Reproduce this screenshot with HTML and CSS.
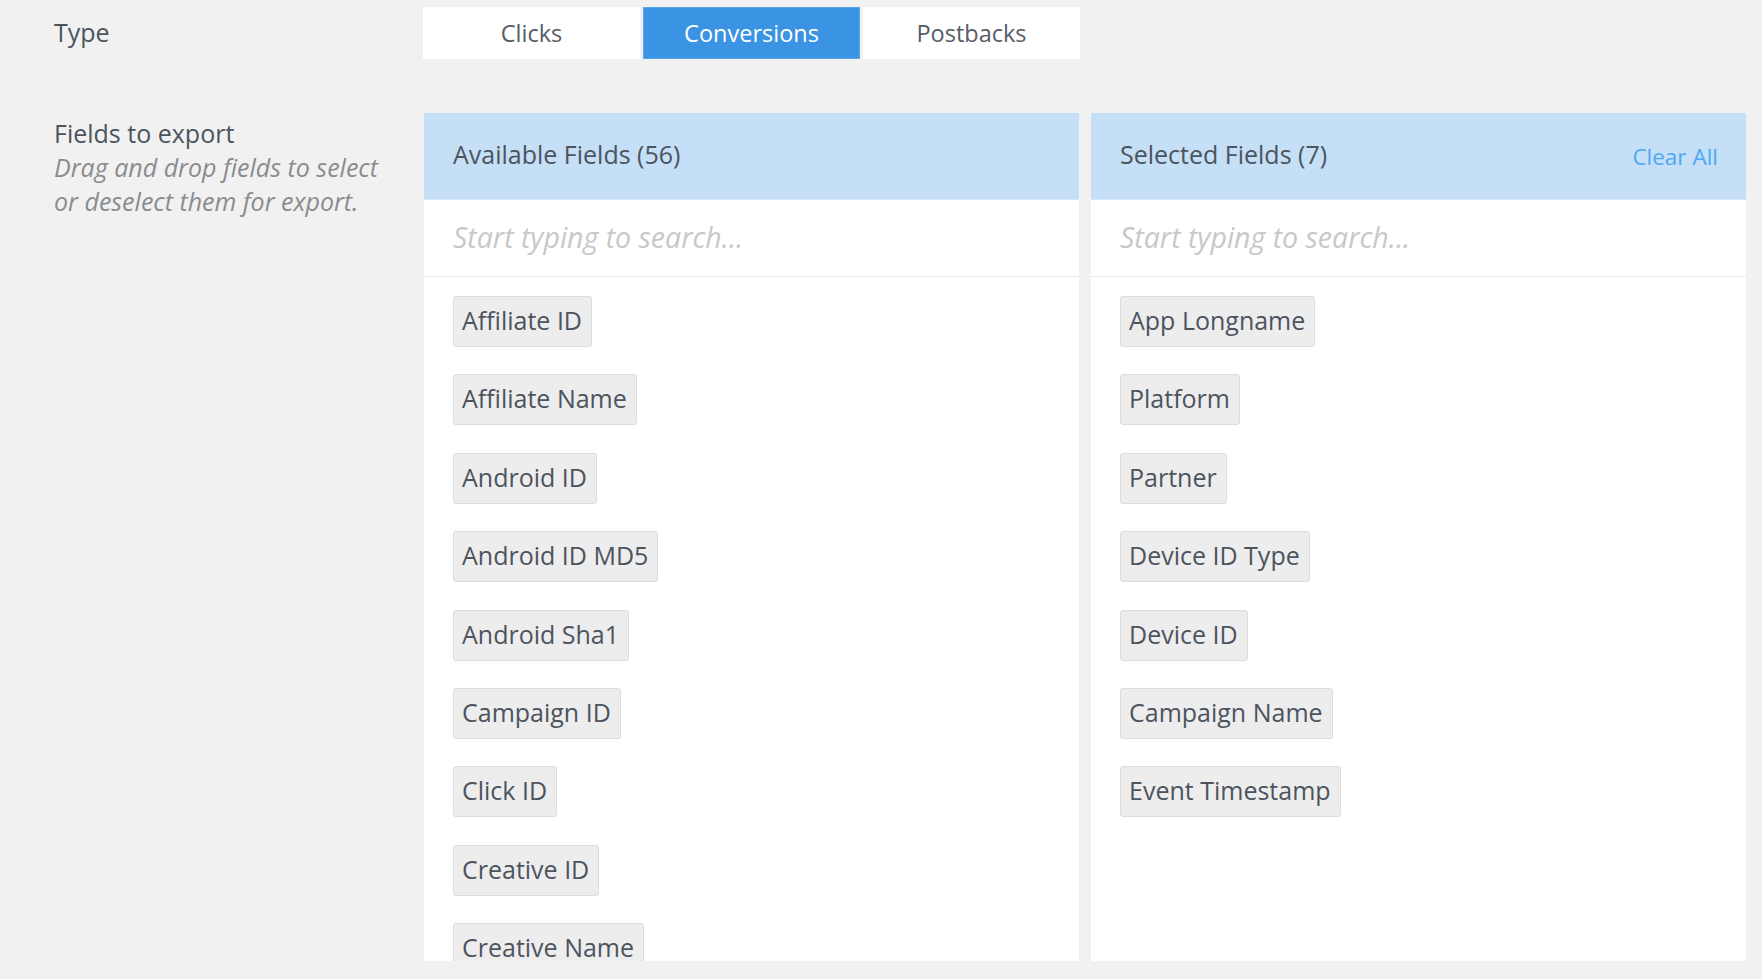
FILE: index.html
```html
<!DOCTYPE html>
<html lang="en">
<head>
<meta charset="utf-8">
<title>Export</title>
<link rel="stylesheet" href="styles.css">
</head>
<body>
<div class="page">
  <div class="row row-type">
    <div class="label">Type</div>
    <div class="tabs">
      <div class="tab">Clicks</div>
      <div class="tab active">Conversions</div>
      <div class="tab">Postbacks</div>
    </div>
  </div>
  <div class="row row-fields">
    <div class="label">
      <div>Fields to export</div>
      <div class="hint">Drag and drop fields to select<br>or deselect them for export.</div>
    </div>
    <div class="panels">
      <div class="panel">
        <div class="panel-head"><span>Available Fields (56)</span></div>
        <div class="search">Start typing to search...</div>
        <div class="list">
          <div class="chip">Affiliate ID</div>
          <div class="chip">Affiliate Name</div>
          <div class="chip">Android ID</div>
          <div class="chip">Android ID MD5</div>
          <div class="chip">Android Sha1</div>
          <div class="chip">Campaign ID</div>
          <div class="chip">Click ID</div>
          <div class="chip">Creative ID</div>
          <div class="chip">Creative Name</div>
        </div>
      </div>
      <div class="panel">
        <div class="panel-head"><span>Selected Fields (7)</span><a class="clear">Clear All</a></div>
        <div class="search">Start typing to search...</div>
        <div class="list">
          <div class="chip">App Longname</div>
          <div class="chip">Platform</div>
          <div class="chip">Partner</div>
          <div class="chip">Device ID Type</div>
          <div class="chip">Device ID</div>
          <div class="chip">Campaign Name</div>
          <div class="chip">Event Timestamp</div>
        </div>
      </div>
    </div>
  </div>
</div>
</body>
</html>
```

FILE: styles.css
```css
* { box-sizing: border-box; }
html, body { margin: 0; height: 100%; }
body {
  background: #f1f1f1;
  font-family: "Open Sans", "Liberation Sans", sans-serif;
  color: #4c545e;
  overflow: hidden;
}
.page {
  height: 100vh;
  display: flex;
  flex-direction: column;
  padding: 7px 16px 18px 54px;
}
.row {
  display: grid;
  grid-template-columns: 369px 1fr;
}
.row-type {
  align-items: center;
}
.row-type .label {
  margin-top: -2px;
}
.label {
  font-size: 25px;
  line-height: 34px;
}
.tabs {
  display: flex;
  gap: 3px;
}
.tab {
  width: 217px;
  height: 52px;
  line-height: 52px;
  text-align: center;
  background: #ffffff;
  font-size: 23.5px;
  color: #555c66;
}
.tab.active {
  background: #3b93e4;
  color: #ffffff;
  box-shadow: inset 0 0 0 1px #5ba7ec;
}
.row-fields {
  flex: 1;
  min-height: 0;
  margin-top: 54px;
}
.row-fields .label {
  padding-top: 3px;
}
.hint {
  font-style: italic;
  color: #8a8c8f;
}
.panels {
  display: grid;
  grid-template-columns: 1fr 1fr;
  gap: 12px;
  margin-left: 1px;
  min-height: 0;
}
.panel {
  background: #ffffff;
  display: flex;
  flex-direction: column;
  min-height: 0;
  overflow: hidden;
}
.panel-head {
  background: #c4dff6;
  height: 87px;
  border-bottom: 1px solid #d6e8f8;
  padding: 0 28px 5px 29px;
  display: flex;
  align-items: center;
  justify-content: space-between;
  font-size: 25px;
  color: #4c545e;
}
.clear {
  color: #4ea9f2;
  font-size: 22.5px;
  margin-top: 6px;
}
.search {
  height: 77px;
  border-bottom: 1px solid #ebebeb;
  padding: 0 29px;
  line-height: 74px;
  font-size: 28.5px;
  font-style: italic;
  color: #c8c8c8;
}
.list {
  flex: 1;
  min-height: 0;
  overflow: hidden;
  padding: 19px 29px;
  display: flex;
  flex-direction: column;
  align-items: flex-start;
  gap: 27.4px;
}
.chip {
  flex: none;
  background: #ededed;
  border: 1px solid #dcdcdc;
  border-radius: 3px;
  padding: 6px 9px 8px 8px;
  font-size: 25px;
  line-height: 35px;
  color: #4c545e;
  white-space: nowrap;
}
```
